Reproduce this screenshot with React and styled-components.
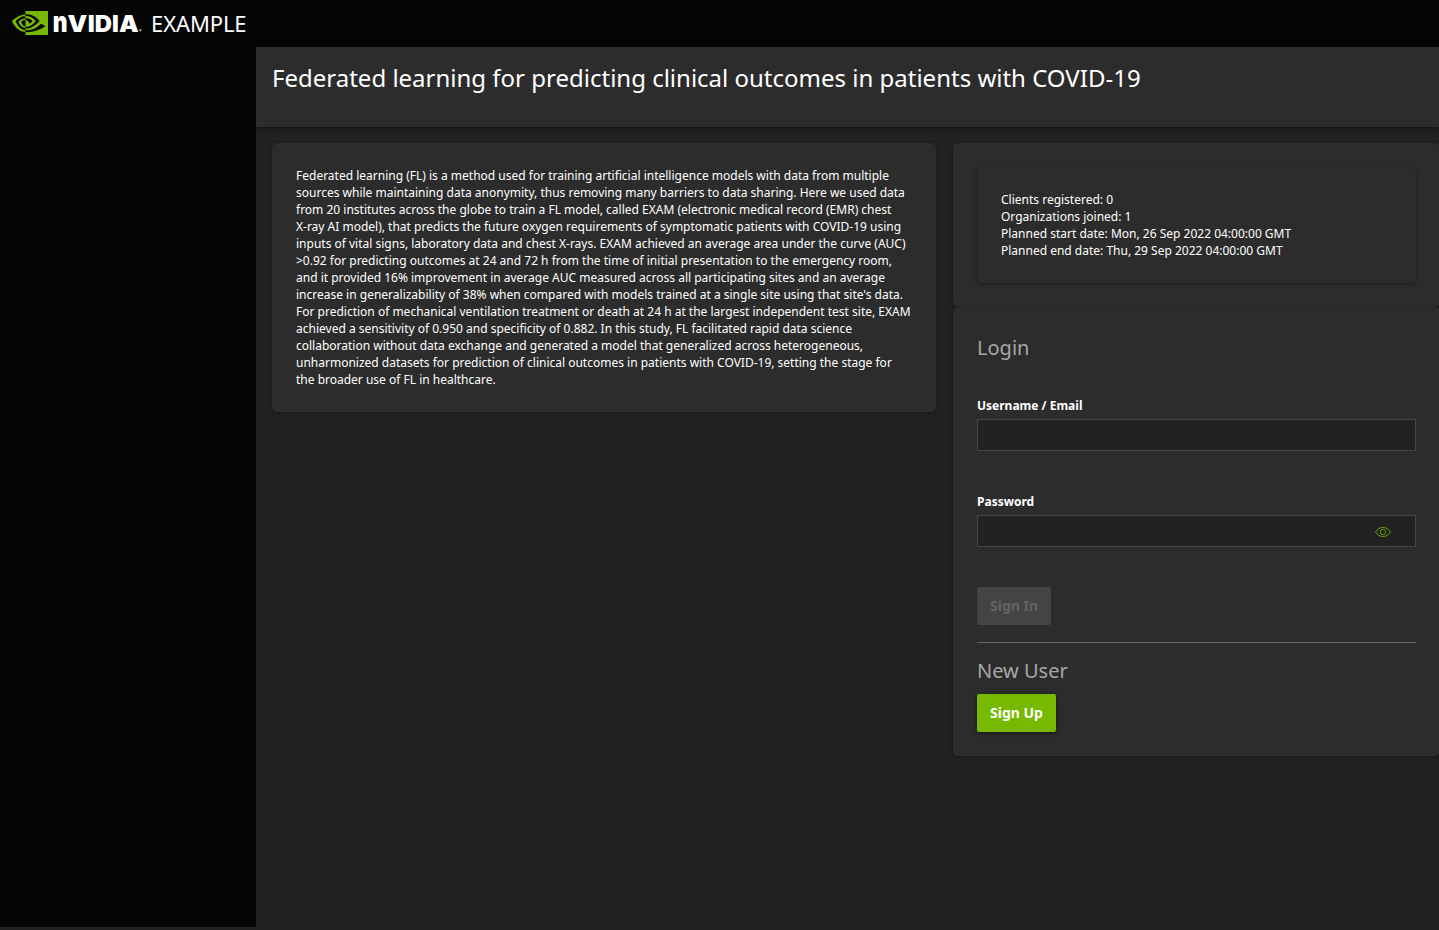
import React from "react";
import styled, { createGlobalStyle } from "styled-components";
import { SiNvidia } from "react-icons/si";

const GlobalStyle = createGlobalStyle`
  * { box-sizing: border-box; }
  body {
    margin: 0;
    background: #222222;
    color: #ffffff;
    font-family: "Noto Sans", sans-serif;
    font-size: 12px;
    line-height: 17px;
    overflow: hidden;
  }
`;

const Page = styled.div`
  height: 930px;
  display: flex;
  flex-direction: column;
  overflow: hidden;
`;

const AppBar = styled.header`
  height: 47px;
  flex: none;
  display: flex;
  align-items: flex-start;
  padding: 5px 12px 0;
  background: #050505;
`;

const Wordmark = styled.svg`
  display: block;
  width: 92px;
  height: 30px;
  margin: 6px 6px 0 4px;
  overflow: visible;
  font-family: Inter, sans-serif;
  font-weight: 900;
  fill: #ffffff;
`;

const Symbol = styled(SiNvidia)`
  display: block;
  width: 36px;
  height: 36px;
  color: #76b900;
`;

const AppName = styled.div`
  font-size: 22px;
  line-height: 30px;
  letter-spacing: -0.1px;
  margin: 3px 0 0 1px;
`;

const Body = styled.div`
  flex: 1;
  display: flex;
  min-height: 0;
`;

const Sidebar = styled.nav`
  width: 256px;
  height: 880px;
  flex: none;
  background: #050505;
`;

const Main = styled.main`
  flex: 1;
  min-width: 0;
  overflow: hidden;
`;

const TitleBar = styled.div`
  height: 80px;
  padding: 14px 16px 0;
  background: #2c2c2c;
  box-shadow: 0 2px 6px rgba(0, 0, 0, 0.45);
`;

const Title = styled.h1`
  margin: 0;
  font-size: 24px;
  line-height: 33px;
  font-weight: 400;
`;

const Columns = styled.div`
  display: grid;
  grid-template-columns: 664px 487px;
  column-gap: 17px;
  align-items: start;
  padding: 16px 0 0 16px;
`;

const Card = styled.section`
  padding: 24px;
  background: #2c2c2c;
  border-radius: 5px;
  box-shadow: 0 1px 4px rgba(0, 0, 0, 0.35);
`;

const Line = styled.div`
  white-space: nowrap;
`;

const Form = styled.form`
  display: flex;
  flex-direction: column;
  align-items: flex-start;
`;

const Heading = styled.h2`
  margin: ${(p) => p.$margin};
  font-size: 20px;
  line-height: 28px;
  font-weight: 400;
  color: #a7a7a7;
`;

const Label = styled.label`
  height: 22px;
  font-weight: 700;
`;

const Field = styled.div`
  width: 439px;
  height: 32px;
  margin-bottom: ${(p) => p.$gap}px;
  display: flex;
  align-items: center;
  padding-right: 24px;
  background: #222222;
  border: 1px solid #464646;
`;

const Input = styled.input`
  flex: 1;
  min-width: 0;
  height: 100%;
  border: 0;
  padding: 0 8px;
  outline: 0;
  background: transparent;
  color: #ffffff;
  font: inherit;
`;

const EyeIcon = styled.svg`
  display: block;
  width: 16px;
  height: 12px;
  margin-top: 1px;
  fill: none;
  stroke: #659d05;
`;

const Button = styled.button`
  height: 38px;
  padding: 0 13px;
  border: 0;
  border-radius: 2px;
  font: 700 14px/20px "Noto Sans", sans-serif;
  color: #ffffff;
  background: #76b900;
  box-shadow: 0 1px 4px rgba(0, 0, 0, 0.5);

  &:disabled {
    color: #636363;
    background: #444444;
    box-shadow: none;
  }
`;

const Divider = styled.hr`
  width: 439px;
  height: 1px;
  margin: 17px 0 14px;
  border: 0;
  background: #666666;
`;

const LETTERS = [
  { char: "n", x: 0.8, width: 14.8, size: 28 },
  { char: "V", x: 15.6, width: 19.8, size: 22.3 },
  { char: "I", x: 35.7, width: 7, size: 22.3 },
  { char: "D", x: 42.8, width: 17.2, size: 22.3 },
  { char: "I", x: 60.1, width: 6.8, size: 22.3 },
  { char: "A", x: 66.9, width: 19.6, size: 22.3 },
];

function Brand() {
  return (
    <>
      <Symbol />
      <Wordmark viewBox="0 0 92 30" aria-label="NVIDIA">
        {LETTERS.map(({ char, x, width, size }) => (
          <text key={x} x={x} y="20.500" fontSize={size} textLength={width} lengthAdjust="spacingAndGlyphs">
            {char}
          </text>
        ))}
        <text x="87" y="20.800" fontSize="4" fontWeight="700">®</text>
      </Wordmark>
    </>
  );
}

export default function App() {
  return (
    <Page>
      <GlobalStyle />
      <AppBar>
        <Brand />
        <AppName>EXAMPLE</AppName>
      </AppBar>
      <Body>
        <Sidebar />
        <Main>
          <TitleBar>
            <Title>Federated learning for predicting clinical outcomes in patients with COVID-19</Title>
          </TitleBar>
          <Columns>
            <Card>
              Federated learning (FL) is a method used for training artificial intelligence models with data from
              multiple sources while maintaining data anonymity, thus removing many barriers to data sharing. Here we
              used data from 20 institutes across the globe to train a FL model, called EXAM (electronic medical record
              (EMR) chest
              <br />
              X-ray AI model), that predicts the future oxygen requirements of symptomatic patients with COVID-19 using
              inputs of vital signs, laboratory data and chest X-rays. EXAM achieved an average area under the curve
              (AUC) &gt;0.92 for predicting outcomes at 24 and 72 h from the time of initial presentation to the
              emergency room, and it provided 16% improvement in average AUC measured across all participating sites
              and an average increase in generalizability of 38% when compared with models trained at a single site
              using that site's data. For prediction of mechanical ventilation treatment or death at 24 h at the
              largest independent test site, EXAM achieved a sensitivity of 0.950 and specificity of 0.882. In this
              study, FL facilitated rapid data science collaboration without data exchange and generated a model that
              generalized across heterogeneous, unharmonized datasets for prediction of clinical outcomes in patients
              with COVID-19, setting the stage for the broader use of FL in healthcare.
            </Card>
            <div>
              <Card>
                <Card>
                  <Line>Clients registered: 0</Line>
                  <Line>Organizations joined: 1</Line>
                  <Line>Planned start date: Mon, 26 Sep 2022 04:00:00 GMT</Line>
                  <Line>Planned end date: Thu, 29 Sep 2022 04:00:00 GMT</Line>
                </Card>
              </Card>
              <Card>
                <Form>
                  <Heading $margin="3px 0 35px">Login</Heading>
                  <Label htmlFor="user">Username / Email</Label>
                  <Field $gap={42}>
                    <Input id="user" />
                  </Field>
                  <Label htmlFor="pass">Password</Label>
                  <Field $gap={40}>
                    <Input id="pass" type="password" />
                    <EyeIcon viewBox="0 0 16 12">
                      <path d="M0.5 6C2.5 2.8 5 1.5 8 1.5s5.500 1.300 7.500 4.500c-2 3.200-4.500 4.500-7.500 4.500S2.500 9.200 .5 6Z" />
                      <rect x="5.500" y="3.500" width="5" height="5" rx="2" />
                    </EyeIcon>
                  </Field>
                  <Button type="button" disabled>Sign In</Button>
                  <Divider />
                  <Heading $margin="0 0 9px">New User</Heading>
                  <Button type="button">Sign Up</Button>
                </Form>
              </Card>
            </div>
          </Columns>
        </Main>
      </Body>
    </Page>
  );
}
